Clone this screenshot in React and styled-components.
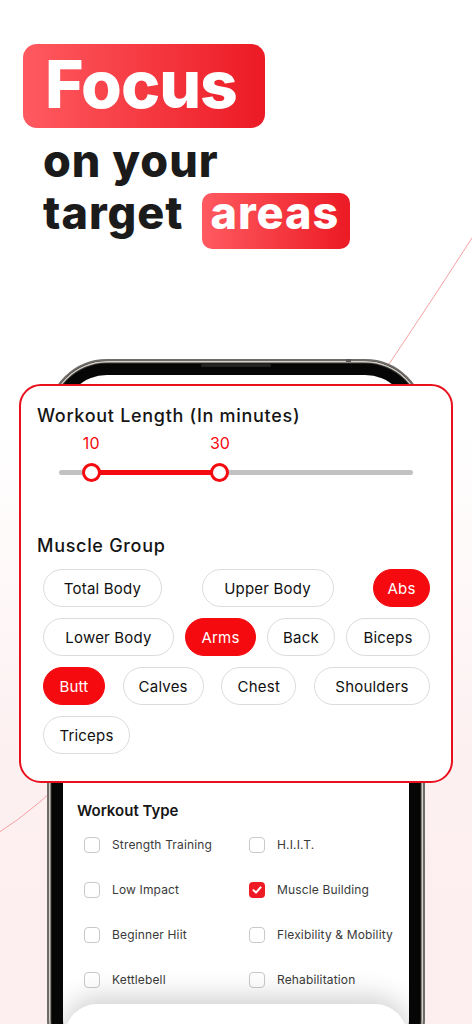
import React from 'react';
import styled, { createGlobalStyle } from 'styled-components';

const RED = '#f50a0f';

const GlobalStyle = createGlobalStyle`
  html, body { margin: 0; padding: 0; }
  body { font-family: Inter, "Noto Sans", sans-serif; background: #fff; }
  *, *::before, *::after { box-sizing: border-box; }
`;

const Page = styled.div`
  position: relative;
  width: 472px;
  height: 1024px;
  overflow: hidden;
  background: linear-gradient(180deg, #ffffff 0px, #ffffff 430px, #fdf0f1 760px, #fdeeef 1024px);
`;

const Swoosh = styled.svg`
  position: absolute;
  left: 0;
  top: 0;
  width: 472px;
  height: 1024px;
  pointer-events: none;
`;

const Header = styled.header`
  position: relative;
  padding: 44px 0 0 23px;
`;

const badgeGradient = 'linear-gradient(90deg, #ff5a60 0%, #ec1a24 100%)';

const FocusBadge = styled.div`
  display: inline-block;
  height: 84px;
  padding: 0 28px 4px 22px;
  border-radius: 14px;
  background: ${badgeGradient};
  color: #fff;
  font-size: 66px;
  font-weight: 800;
  line-height: 80px;
  letter-spacing: -1px;
`;

const HeadLine = styled.div`
  margin-left: 20px;
  color: #1b1b1b;
  font-size: 45px;
  font-weight: 800;
  line-height: 45px;
  letter-spacing: 1px;
`;

const FirstLine = styled(HeadLine)`
  margin-top: 10px;
`;

const SecondLine = styled(HeadLine)`
  display: flex;
  align-items: baseline;
  gap: 18px;
  margin-top: 7px;
`;

const AreasBadge = styled.span`
  display: inline-block;
  padding: 0 11px 16px 9px;
  line-height: 40px;
  border-radius: 10px;
  background: ${badgeGradient};
  color: #fff;
`;

const Stage = styled.section`
  position: relative;
  margin-top: 110px;
`;

const Phone = styled.div`
  position: relative;
  width: 378px;
  height: 720px;
  margin-left: 47px;
  padding: 14px;
  border: 2px solid #6f6c67;
  border-radius: 60px;
  background: #060606;
  box-shadow: inset 0 0 0 1.5px #d3cec7, inset 0 0 0 2.5px #3b3936;
`;

const Speaker = styled.span`
  position: absolute;
  top: 3px;
  left: 50%;
  width: 70px;
  height: 3px;
  margin-left: -35px;
  border-radius: 2px;
  background: #232323;
`;

const Sensor = styled.span`
  position: absolute;
  top: -2px;
  left: 297px;
  width: 5px;
  height: 3px;
  background: #5a5855;
`;

const Screen = styled.div`
  display: flex;
  flex-direction: column;
  height: 100%;
  padding-top: 426px;
  border-radius: 44px;
  background: #fff;
  overflow: hidden;
`;

const TypeTitle = styled.h3`
  margin: 0 0 0 14px;
  color: #161616;
  font-size: 15px;
  font-weight: 600;
  line-height: 20px;
`;

const TypeGrid = styled.div`
  display: grid;
  grid-template-columns: 165px 1fr;
  grid-auto-rows: 45px;
  margin: 1px 0 0 21px;
`;

const TypeOption = styled.label`
  display: flex;
  align-items: center;
  gap: 12px;
  color: #3a3a3a;
  font-size: 12px;
  font-weight: 400;
  letter-spacing: 0.15px;
`;

const Box = styled.span`
  display: flex;
  align-items: center;
  justify-content: center;
  width: 16px;
  height: 16px;
  flex: none;
  border-radius: 4px;
  border: ${(p) => (p.$checked ? 'none' : '1.5px solid #c9c9c9')};
  background: ${(p) => (p.$checked ? '#ee1a24' : '#fff')};
`;

const Sheet = styled.div`
  flex: none;
  height: 220px;
  margin: 2px 2px 0;
  border-radius: 32px 32px 0 0;
  background: #fff;
  box-shadow: 0 -6px 28px rgba(0, 0, 0, 0.2);
`;

const FilterCard = styled.div`
  position: absolute;
  top: 25px;
  left: 19px;
  width: 434px;
  padding: 19px 16px 27px 16px;
  border: 2px solid #e8101c;
  border-radius: 22px;
  background: #fff;
`;

const SectionTitle = styled.h2`
  margin: ${(p) => p.$gap || 0}px 0 0;
  color: #151515;
  font-size: 18px;
  font-weight: 500;
  line-height: 22px;
  letter-spacing: 0.7px;
`;

const SliderWrap = styled.div`
  position: relative;
  height: 60px;
  margin: 6px 22px 0;
`;

const Track = styled.div`
  position: absolute;
  left: 0;
  right: 0;
  top: 37px;
  height: 5px;
  border-radius: 3px;
  background: #c2c2c2;
`;

const TrackFill = styled.div`
  position: absolute;
  top: 37px;
  height: 5px;
  background: ${RED};
`;

const Thumb = styled.span`
  position: absolute;
  top: 30px;
  width: 19px;
  height: 19px;
  margin-left: -9.5px;
  border-radius: 50%;
  border: 3px solid ${RED};
  background: #fff;
`;

const ValueLabel = styled.span`
  position: absolute;
  top: 0;
  transform: translateX(-50%);
  color: ${RED};
  font-size: 16px;
  line-height: 20px;
`;

const Chips = styled.div`
  display: flex;
  flex-wrap: wrap;
  justify-content: space-between;
  column-gap: 10px;
  row-gap: 11px;
  width: 387px;
  margin: 12px 0 0 6px;
`;

const Chip = styled.span`
  display: flex;
  align-items: center;
  justify-content: center;
  width: ${(p) => p.$w}px;
  height: 38px;
  border-radius: 19px;
  border: 1.5px solid ${(p) => (p.$on ? RED : '#dcdcdc')};
  background: ${(p) => (p.$on ? RED : '#fff')};
  color: ${(p) => (p.$on ? '#fff' : '#111')};
  font-size: 15px;
  font-weight: 400;
  letter-spacing: 0.2px;
  white-space: nowrap;
`;

const MIN = 5;
const MAX = 60;
const range = [10, 30];
const pct = (v) => ((v - MIN) / (MAX - MIN)) * 100;

const muscles = [
  { name: 'Total Body', w: 119 },
  { name: 'Upper Body', w: 132 },
  { name: 'Abs', w: 57, on: true },
  { name: 'Lower Body', w: 131 },
  { name: 'Arms', w: 71, on: true },
  { name: 'Back', w: 68 },
  { name: 'Biceps', w: 84 },
  { name: 'Butt', w: 62, on: true },
  { name: 'Calves', w: 81 },
  { name: 'Chest', w: 75 },
  { name: 'Shoulders', w: 116 },
  { name: 'Triceps', w: 87 },
];

const workoutTypes = [
  { name: 'Strength Training' },
  { name: 'H.I.I.T.' },
  { name: 'Low Impact' },
  { name: 'Muscle Building', checked: true },
  { name: 'Beginner Hiit' },
  { name: 'Flexibility & Mobility' },
  { name: 'Kettlebell' },
  { name: 'Rehabilitation' },
];

function Check() {
  return (
    <svg width="12" height="12" viewBox="0 0 12 12" fill="none">
      <path d="M2.5 6.3 L5 8.6 L9.6 3.4" stroke="#fff" strokeWidth="2" strokeLinecap="round" strokeLinejoin="round" />
    </svg>
  );
}

function RangeSlider() {
  const [lo, hi] = range.map(pct);
  return (
    <SliderWrap>
      <Track />
      <TrackFill style={{ left: `${lo}%`, width: `${hi - lo}%` }} />
      {range.map((v) => (
        <React.Fragment key={v}>
          <ValueLabel style={{ left: `${pct(v)}%` }}>{v}</ValueLabel>
          <Thumb style={{ left: `${pct(v)}%` }} />
        </React.Fragment>
      ))}
    </SliderWrap>
  );
}

export default function App() {
  return (
    <>
      <GlobalStyle />
      <Page>
        <Swoosh viewBox="0 0 472 1024">
          <path d="M -2 833 Q 148 740 474 235" fill="none" stroke="#f7a1a4" strokeWidth="1" />
        </Swoosh>

        <Header>
          <FocusBadge>Focus</FocusBadge>
          <FirstLine>on your</FirstLine>
          <SecondLine>
            <span>target</span>
            <AreasBadge>areas</AreasBadge>
          </SecondLine>
        </Header>

        <Stage>
          <Phone>
            <Sensor />
            <Speaker />
            <Screen>
              <TypeTitle>Workout Type</TypeTitle>
              <TypeGrid>
                {workoutTypes.map((t) => (
                  <TypeOption key={t.name}>
                    <Box $checked={t.checked}>{t.checked && <Check />}</Box>
                    {t.name}
                  </TypeOption>
                ))}
              </TypeGrid>
              <Sheet />
            </Screen>
          </Phone>

          <FilterCard>
            <SectionTitle>Workout Length (In minutes)</SectionTitle>
            <RangeSlider />
            <SectionTitle $gap={42}>Muscle Group</SectionTitle>
            <Chips>
              {muscles.map((m) => (
                <Chip key={m.name} $w={m.w} $on={m.on}>
                  {m.name}
                </Chip>
              ))}
            </Chips>
          </FilterCard>
        </Stage>
      </Page>
    </>
  );
}
